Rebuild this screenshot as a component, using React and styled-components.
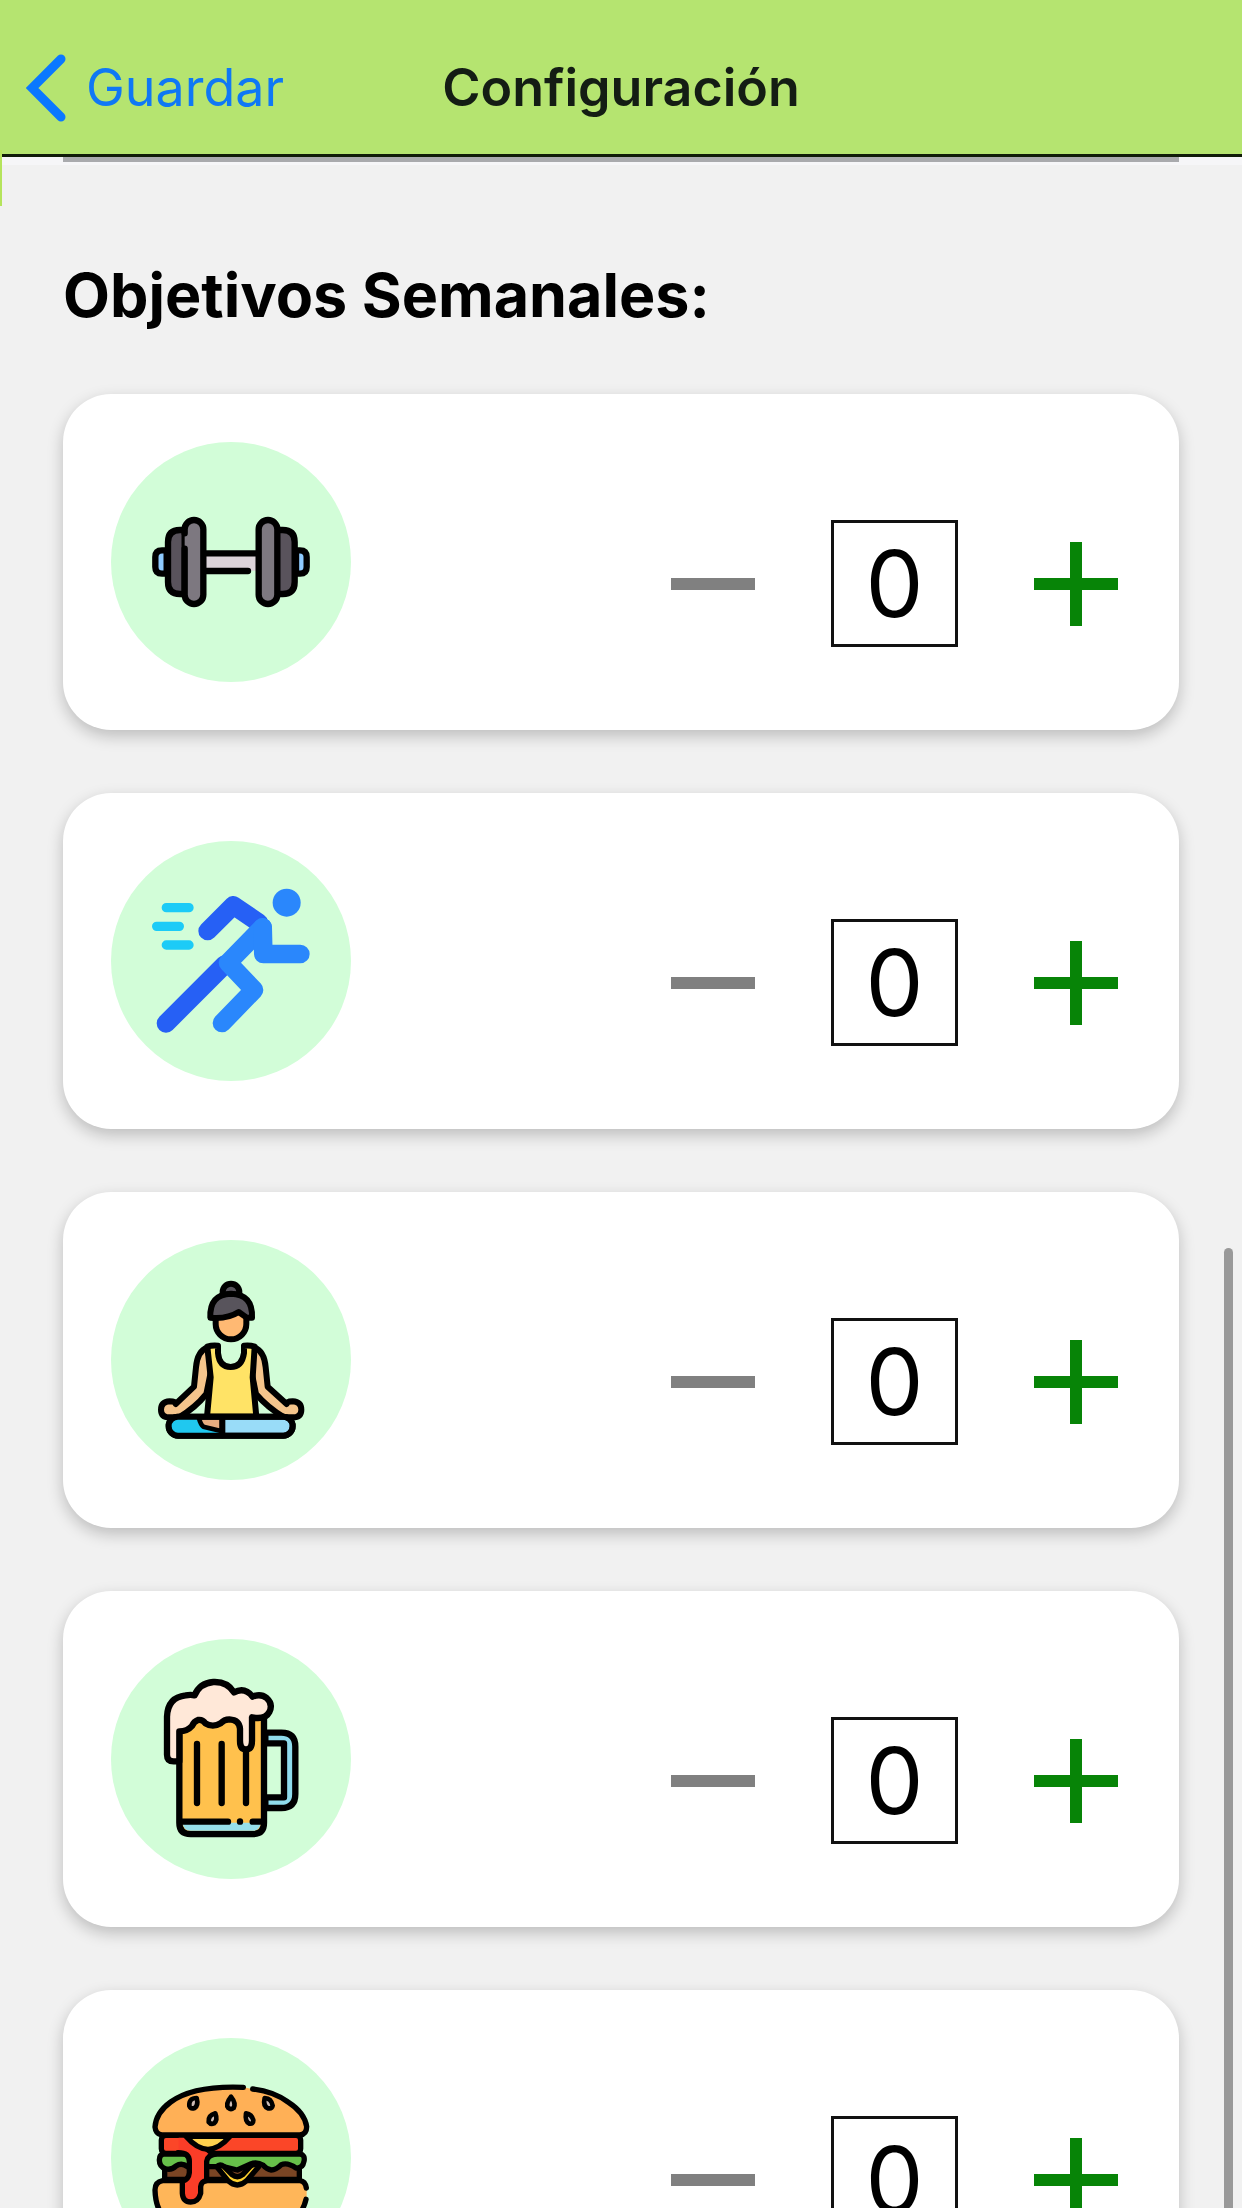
import React, { useState } from 'react'
import styled, { createGlobalStyle } from 'styled-components'

const DumbbellIcon = () => (
    <Drawing viewBox='33 36 720 720' aria-hidden='true'>
        <g stroke='#000' strokeWidth='19' strokeLinecap='round' strokeLinejoin='round'>
            <path d='M200 361h-14q-20 0-20 20v30q0 20 20 20h14z' fill='#8ecbff' />
            <path d='M588 361h12q20 0 20 20v30q0 20-20 20h-12z' fill='#8ecbff' />
            <path d='M310 370h165v52h-165z' fill='#dcd3d9' stroke='none' />
            <path d='M318 370h150M318 423h126' fill='none' />
            <path d='M254 300h-14q-36 0-36 36v120q0 36 36 36h14z' fill='#59535c' />
            <path d='M530 300h18q36 0 36 36v120q0 36-36 36h-18z' fill='#59535c' />
            <rect x='254' y='270' width='56' height='252' rx='28' fill='#7d7880' stroke='none' />
            <path d='M254 310v-12a28 28 0 0 1 56 0v196a28 28 0 0 1-56 0v-138' fill='none' />
            <rect x='476' y='270' width='56' height='252' rx='28' fill='#7d7880' />
        </g>
    </Drawing>
)

const RunnerIcon = () => (
    <Drawing viewBox='33 33 720 720' aria-hidden='true'>
        <g fill='none' strokeLinecap='round' strokeLinejoin='round'>
            <path d='M199 233h68M170 289h68M199 345h68' stroke='#1ccbf7' strokeWidth='28' />
            <path d='M323 303l77-77 76 52M198 580l176-176' stroke='#2660f5' strokeWidth='56' />
            <path d='M488 292l-104 106 78 82-96 99' stroke='#2a87fc' strokeWidth='56' />
            <path d='M488 292l2 80h111' stroke='#2a87fc' strokeWidth='56' />
        </g>
        <circle cx='560' cy='218' r='42' fill='#2a87fc' />
    </Drawing>
)

const YogaIcon = () => (
    <Drawing viewBox='33 30 720 720' aria-hidden='true'>
        <g stroke='#000' strokeWidth='18' strokeLinecap='round' strokeLinejoin='round'>
            <path d='M368 196v-10a25 25 0 0 1 50 0v10' fill='#58545c' />
            <path d='M347 262v20a46 46 0 0 0 92 0v-22l-20-18z' fill='#ffb973' />
            <path d='M331 263q-3-70 62-72 66 2 63 72h-16l-24-17q-34 22-85 17z' fill='#58545c' />
            <path d='M322 352q-30 12-34 60l-6 58-55 52q2-8-18-8-26 2-26 25t26 23h28q48-28 82-70l15-74z' fill='#f5c58c' />
            <path d='M463 352q30 12 34 60l6 58 57 52q0-8 18-8 26 2 26 25t-26 23h-26q-50-30-84-70l-15-74z' fill='#f5c58c' />
            <path d='M322 350q14-5 32-3v22q4 42 38 42t40-42v-22q18-2 32 3l-6 92 11 118h-148l11-118z' fill='#ffe366' />
            <rect x='206' y='560' width='372' height='57' rx='28' fill='#99dcf8' />
            <path d='M364 564v50H236a24 24 0 0 1 0-50z' fill='#20c8ef' stroke='none' />
            <path d='M296 562h70v42l-56-14q-8-6-14-28z' fill='#e9ad80' strokeWidth='14' />
            <path d='M367 562v54' fill='none' />
            <rect x='206' y='560' width='372' height='57' rx='28' fill='none' />
        </g>
    </Drawing>
)

const BeerIcon = () => (
    <Drawing viewBox='33 27 720 720' aria-hidden='true'>
        <g stroke='#000' strokeWidth='19' strokeLinecap='round' strokeLinejoin='round'>
            <path d='M496 308h48q42 0 42 42v142q0 42-42 42h-48v-32h56V340h-56z' fill='#8fdcec' />
            <path d='M238 262h254v316q0 34-34 34H272q-34 0-34-34z' fill='#ffc14d' />
            <path d='M248 578h234q-2 24-24 24H272q-22 0-24-24z' fill='#96dfea' stroke='none' />
            <path d='M242 575h142M458 575h30' fill='none' />
            <path d='M420 574v1' fill='none' />
            <path d='M291 342v177M365 342v177M438 362v157' fill='none' />
            <path
                d='M238 304V394H221Q201 394 201 374V260Q203 202 257 196Q272 193 284 196Q298 160 340 156Q382 154 402 187Q434 170 458 200Q482 190 500 204Q520 222 508 246Q496 270 456 262V332Q456 358 438 358T420 332V296Q418 270 388 268Q372 268 362 280Q338 294 316 280Q308 268 294 270Q282 274 276 288Q262 304 238 304Z'
                fill='#ffe8d8'
            />
        </g>
    </Drawing>
)

const BurgerIcon = () => (
    <Drawing viewBox='33 54 720 720' aria-hidden='true'>
        <g stroke='#000' strokeWidth='16' strokeLinecap='round' strokeLinejoin='round'>
            <path d='M194 478V430H598V478Z' fill='#7a4524' />
            <path
                d='M190 402H600Q616 404 612 424Q608 446 588 444Q562 426 544 434Q528 450 514 450Q500 448 490 436Q470 424 452 432L412 450L370 440H262Q245 426 228 438Q214 452 196 446Q178 440 178 420Q178 404 190 402Z'
                fill='#67c04a'
            />
            <rect x='184' y='346' width='418' height='54' rx='14' fill='#fb4628' />
            <path
                d='M188 482H602Q620 486 620 508V537Q600 620 520 620H262Q168 614 165 510Q165 486 188 482Z'
                fill='#ffb659'
                stroke='none'
            />
            <path d='M619 504Q616 484 600 482H188Q165 486 165 510Q168 614 262 620H520Q600 614 618 538' fill='none' />
            <path d='M350 440Q360 430 372 440L396 464Q412 476 428 464L452 438Q466 428 476 440L440 482Q412 508 384 482Z' fill='#ffd12e' />
            <path
                d='M236 348H262L326 402V486Q304 492 304 506V522Q298 546 272 546T247 520V486L268 460V424Q262 396 236 396Z'
                fill='#fb3d28'
                stroke='none'
            />
            <path d='M234 398Q268 398 268 424V458Q266 478 247 484V520Q249 546 272 546T302 520V500Q304 484 320 482V424Q322 406 346 402' fill='none' />
            <path d='M258 349Q324 427 390 349Z' fill='#ffd14d' />
            <path
                d='M432 202Q280 196 212 246Q168 278 165 321Q167 342 185 345H600Q620 342 620 320Q614 278 564 246Q520 214 456 207Z'
                fill='#ffb056'
                stroke='none'
            />
            <path d='M430 202Q280 196 212 246Q168 278 165 321Q167 342 185 345H600Q620 342 620 320Q614 278 564 246Q520 214 458 207' fill='none' />
        </g>
        <g fill='#cdbcb6' stroke='#000' strokeWidth='14' strokeLinejoin='round'>
            <path d='M290 234q-24 0-22 24 4 10 16 6 12-8 6-30z' />
            <path d='M393 230q-18 22-8 34 8 6 16 0 8-14-8-34z' />
            <path d='M494 234q-6 24 10 31 12 2 14-8-4-22-24-23z' />
            <path d='M346 280q-22 6-20 26 6 8 16 4 12-10 4-30z' />
            <path d='M438 280q-4 24 10 31 12 2 12-10-4-18-22-21z' />
        </g>
    </Drawing>
)

const goals = [
    { id: 'pesas', label: 'Pesas', Icon: DumbbellIcon },
    { id: 'correr', label: 'Correr', Icon: RunnerIcon },
    { id: 'yoga', label: 'Yoga', Icon: YogaIcon },
    { id: 'cerveza', label: 'Cerveza', Icon: BeerIcon },
    { id: 'hamburguesa', label: 'Hamburguesa', Icon: BurgerIcon },
]

const GoalCard = ({ label, Icon }) => {
    const [count, setCount] = useState(0)

    return (
        <Card>
            <IconCircle>
                <Icon />
            </IconCircle>
            <Stepper>
                <StepButton
                    type='button'
                    $color='#808080'
                    aria-label={`Menos ${label}`}
                    onClick={() => setCount(Math.max(0, count - 1))}
                >
                    <svg viewBox='0 0 84 84' aria-hidden='true'>
                        <path d='M0 42h84' />
                    </svg>
                </StepButton>
                <Count aria-label={label}>{count}</Count>
                <StepButton
                    type='button'
                    $color='#078407'
                    aria-label={`Más ${label}`}
                    onClick={() => setCount(count + 1)}
                >
                    <svg viewBox='0 0 84 84' aria-hidden='true'>
                        <path d='M0 42h84M42 0v84' />
                    </svg>
                </StepButton>
            </Stepper>
        </Card>
    )
}

const App = () => (
    <Screen>
        <GlobalStyle />
        <Header>
            <BackLink href='#guardar'>
                <svg viewBox='0 0 40 68' aria-hidden='true'>
                    <path d='M35 5L6 34l29 29' />
                </svg>
                Guardar
            </BackLink>
            <HeaderTitle>Configuración</HeaderTitle>
        </Header>
        <SectionEdge>
            <hr />
        </SectionEdge>
        <Content>
            <SectionTitle>Objetivos Semanales:</SectionTitle>
            <GoalList>
                {goals.map(({ id, label, Icon }) => (
                    <li key={id}>
                        <GoalCard label={label} Icon={Icon} />
                    </li>
                ))}
            </GoalList>
        </Content>
        <EdgeStrip />
        <ScrollThumb />
    </Screen>
)

export default App

const GlobalStyle = createGlobalStyle`
    * {
        box-sizing: border-box;
    }
    body {
        margin: 0;
        background: #f1f1f1;
        color: #000;
        font-family: Inter, 'Liberation Sans', sans-serif;
    }
`

const Screen = styled.div`
    position: relative;
    height: 100vh;
    overflow: hidden;
`

const Header = styled.header`
    display: grid;
    grid-template-columns: 1fr auto 1fr;
    align-items: center;
    padding: 22px 26px 0;
    height: 157px;
    background: #b5e470;
    border-bottom: 3px solid #101c08;
`

const BackLink = styled.a`
    display: flex;
    align-items: center;
    gap: 20px;
    color: #0f78f5;
    font-size: 52px;
    line-height: 64px;
    text-decoration: none;
    svg {
        width: 40px;
        height: 68px;
        fill: none;
        stroke: #0a78ff;
        stroke-width: 9;
        stroke-linecap: round;
    }
`

const HeaderTitle = styled.h1`
    margin: 0;
    color: #141d14;
    font-size: 52px;
    font-weight: 600;
    line-height: 64px;
`

/* bottom edge of the section that is scrolled under the header */
const SectionEdge = styled.div`
    height: 8px;
    padding: 0 63px;
    background: #f6f6f8;
    hr {
        height: 5px;
        margin: 0;
        border: 0;
        background: #a9aaad;
    }
`

const Content = styled.main`
    padding: 92px 63px 63px;
`

const SectionTitle = styled.h2`
    margin: 0 0 61px;
    font-size: 61px;
    font-weight: 700;
    line-height: 76px;
`

const GoalList = styled.ul`
    display: flex;
    flex-direction: column;
    gap: 63px;
    margin: 0;
    padding: 0;
    list-style: none;
`

const Card = styled.section`
    display: flex;
    align-items: center;
    justify-content: space-between;
    padding: 48px 61px 48px 48px;
    background: #fff;
    border-radius: 48px;
    box-shadow: 0 6px 16px rgba(0, 0, 0, 0.22);
`

const IconCircle = styled.div`
    width: 240px;
    height: 240px;
    border-radius: 50%;
    background: #d2fdd8;
`

const Drawing = styled.svg`
    display: block;
    width: 100%;
    height: 100%;
`

const Stepper = styled.div`
    display: flex;
    align-items: center;
    gap: 76px;
    margin-top: 43px;
`

const StepButton = styled.button`
    width: 84px;
    height: 84px;
    padding: 0;
    border: 0;
    background: none;
    cursor: pointer;
    svg {
        display: block;
        stroke: ${({ $color }) => $color};
        stroke-width: 12;
    }
`

const Count = styled.output`
    width: 127px;
    height: 127px;
    border: 3px solid #111;
    font-size: 92px;
    line-height: 121px;
    text-align: center;
`

const EdgeStrip = styled.div`
    position: absolute;
    top: 150px;
    left: 0;
    width: 2px;
    height: 56px;
    background: #b5e45c;
`

const ScrollThumb = styled.div`
    position: absolute;
    top: 1248px;
    right: 9px;
    bottom: 0;
    width: 9px;
    border-radius: 5px 5px 0 0;
    background: #999;
`
